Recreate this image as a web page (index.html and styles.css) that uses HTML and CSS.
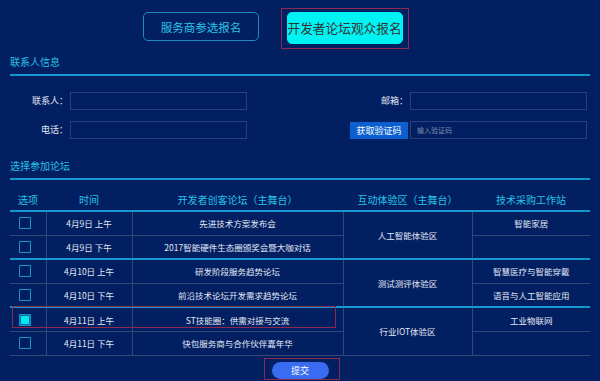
FILE: index.html
```html
<!DOCTYPE html>
<html lang="zh-CN">
<head>
    <meta charset="UTF-8">
    <meta name="viewport" content="width=device-width, initial-scale=1.0">
    <title>论坛报名</title>
    <link rel="stylesheet" href="styles.css">
</head>
<body>
    <div class="page">
        <div class="tabs">
            <button class="tab">服务商参选报名</button>
            <div class="mark tab-mark">
                <button class="tab tab-active">开发者论坛观众报名</button>
            </div>
        </div>

        <h2 class="section-title title-contact">联系人信息</h2>
        <form class="contact-form">
            <div class="form-row">
                <label class="field-label">联系人：</label>
                <input class="field-input" type="text">
                <label class="field-label">邮箱：</label>
                <input class="field-input" type="email">
            </div>
            <div class="form-row">
                <label class="field-label">电话：</label>
                <input class="field-input" type="text">
                <div class="code-cell"><button type="button" class="code-btn">获取验证码</button></div>
                <input class="field-input" type="text" placeholder="输入验证码">
            </div>
        </form>

        <h2 class="section-title title-forum">选择参加论坛</h2>
        <div class="table-wrap">
            <table class="forum-table">
                <colgroup>
                    <col style="width:36px">
                    <col style="width:86px">
                    <col style="width:211px">
                    <col style="width:129px">
                    <col style="width:118px">
                </colgroup>
                <thead>
                    <tr>
                        <th>选项</th>
                        <th>时间</th>
                        <th>开发者创客论坛（主舞台）</th>
                        <th>互动体验区（主舞台）</th>
                        <th>技术采购工作站</th>
                    </tr>
                </thead>
                <tbody>
                    <tr>
                        <td class="check-cell"><span class="check"></span></td>
                        <td>4月9日 上午</td>
                        <td>先进技术方案发布会</td>
                        <td rowspan="2">人工智能体验区</td>
                        <td>智能家居</td>
                    </tr>
                    <tr class="group-end">
                        <td class="check-cell"><span class="check"></span></td>
                        <td>4月9日 下午</td>
                        <td>2017智能硬件生态圈颁奖会暨大咖对话</td>
                        <td></td>
                    </tr>
                    <tr>
                        <td class="check-cell"><span class="check"></span></td>
                        <td>4月10日 上午</td>
                        <td>研发阶段服务趋势论坛</td>
                        <td rowspan="2">测试测评体验区</td>
                        <td>智慧医疗与智能穿戴</td>
                    </tr>
                    <tr class="group-end">
                        <td class="check-cell"><span class="check"></span></td>
                        <td>4月10日 下午</td>
                        <td>前沿技术论坛开发需求趋势论坛</td>
                        <td>语音与人工智能应用</td>
                    </tr>
                    <tr>
                        <td class="check-cell"><span class="check checked"></span></td>
                        <td>4月11日 上午</td>
                        <td>ST技能圈：供需对接与交流</td>
                        <td rowspan="2">行业IOT体验区</td>
                        <td>工业物联网</td>
                    </tr>
                    <tr>
                        <td class="check-cell"><span class="check"></span></td>
                        <td>4月11日 下午</td>
                        <td>快包服务商与合作伙伴嘉年华</td>
                        <td></td>
                    </tr>
                </tbody>
            </table>
            <div class="row-mark"></div>
        </div>

        <div class="submit-row">
            <div class="mark submit-mark">
                <button class="submit-btn">提交</button>
            </div>
        </div>
    </div>
</body>
</html>
```

FILE: styles.css
```css
body {
    margin: 0;
    background-color: #021f61;
    font-family: "Noto Sans CJK SC", "Noto Sans", sans-serif;
    color: #e3e8f6;
}

.page {
    width: 580px;
    padding: 0 10px;
}

button {
    font-family: inherit;
    cursor: pointer;
}

/* top tabs */
.tabs {
    display: flex;
    align-items: flex-start;
    padding: 8px 0 0 133px;
    gap: 22px;
}

.tab {
    display: block;
    margin-top: 4px;
    width: 116px;
    height: 29px;
    border: 1px solid #1a8cc0;
    border-radius: 5px;
    background: transparent;
    color: #2bc4e8;
    font-size: 11.5px;
    padding: 0;
    white-space: nowrap;
}

.mark {
    border: 1.5px solid #8a2a4c;
}

.tab-mark {
    padding: 2.5px 5px 4.5px 4.5px;
}

.tab-mark .tab {
    margin-top: 0;
}

.tab-active {
    height: 32px;
    background-color: #00f3f3;
    border-color: #00f3f3;
    color: #333;
    font-size: 12.7px;
}

/* section titles */
.section-title {
    margin: 0;
    font-size: 10px;
    font-weight: normal;
    color: #27c2e6;
    line-height: 14px;
    border-bottom: 2px solid #1598cb;
    padding-bottom: 5px;
}

.title-contact {
    margin-top: 6px;
}

.title-forum {
    margin-top: 20px;
}

/* contact form */
.contact-form {
    padding: 16px 3px 0 0;
}

.form-row {
    display: grid;
    grid-template-columns: 60px 177px 1fr 177px;
    align-items: center;
    margin-bottom: 11px;
}

.form-row:last-child {
    margin-bottom: 0;
}

.field-label {
    font-size: 9px;
    line-height: 12px;
    text-align: right;
    padding-right: 2px;
    color: #e3e8f6;
}

.field-input {
    display: block;
    box-sizing: border-box;
    height: 18px;
    margin: 0;
    border: 1px solid #2b3f7c;
    background: transparent;
    color: #fff;
    font-size: 7px;
    padding: 0 6px;
    font-family: inherit;
}

.field-input::placeholder {
    color: #7b89ad;
}

.code-cell {
    display: flex;
    justify-content: flex-end;
    padding-right: 2px;
}

.code-btn {
    display: block;
    height: 17px;
    width: 58px;
    padding: 0;
    border: none;
    background-color: #0b5fcf;
    color: #fff;
    font-size: 9px;
}

/* forum table */
.table-wrap {
    position: relative;
    margin-top: 8px;
}

.forum-table {
    width: 580px;
    border-collapse: collapse;
    table-layout: fixed;
}

.forum-table th {
    height: 22px;
    padding: 0;
    font-size: 10px;
    font-weight: normal;
    color: #27c2e6;
    border-bottom: 2px solid #1598cb;
}

.forum-table td {
    height: 22.6px;
    padding: 0;
    font-size: 8.5px;
    line-height: 12px;
    text-align: center;
    border: 1px solid #364677;
    color: #e3e8f6;
}

.forum-table tr td:first-child {
    border-left: none;
}

.forum-table tr td:last-child {
    border-right: none;
}

.forum-table tr.group-end td,
.forum-table td[rowspan] {
    border-bottom: 2px solid #1598cb;
}

.forum-table tbody tr:last-child td,
.forum-table tbody tr:nth-child(5) td[rowspan] {
    border-bottom: 1px solid #364677;
}

.check-cell {
    text-align: left !important;
}

.check {
    display: block;
    box-sizing: border-box;
    width: 12px;
    height: 12px;
    margin-left: 9px;
    border: 1.5px solid #1a93c4;
}

.check.checked {
    background-color: #00e9ee;
    box-shadow: inset 0 0 0 1px #0f6fa8;
}

.row-mark {
    position: absolute;
    left: 2px;
    top: 118px;
    width: 322px;
    height: 20px;
    border: 1.5px solid #8a2a4c;
}

/* submit */
.submit-row {
    display: flex;
    padding-left: 254px;
    margin-top: 2px;
}

.submit-mark {
    padding: 3.5px 10.5px 0 6.5px;
}

.submit-btn {
    display: block;
    width: 57px;
    height: 17px;
    border: none;
    border-radius: 9px;
    background-color: #3a6cf2;
    color: #fff;
    font-size: 9px;
    padding: 0;
}
```
